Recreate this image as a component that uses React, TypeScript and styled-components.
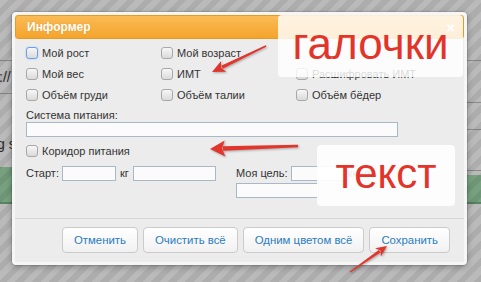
import React from 'react';
import styled, { createGlobalStyle } from 'styled-components';

const Global = createGlobalStyle`
  html, body { margin: 0; padding: 0; }
  body {
    width: 481px; height: 282px; overflow: hidden;
    font-family: "Liberation Sans", Arial, sans-serif;
  }
  #root { width: 481px; height: 282px; }
`;

const Stage = styled.div`
  position: relative;
  width: 481px;
  height: 282px;
  overflow: hidden;
  background: #ffffff;
  display: flex;
  justify-content: space-between;
`;

const SidePane = styled.div<{ $w: number }>`
  width: ${p => p.$w}px;
  display: flex;
  flex-direction: column;
  overflow: hidden;
`;

const LineBox = styled.div<{ $mt: number; $h: number }>`
  margin-top: ${p => p.$mt}px;
  height: ${p => p.$h}px;
  flex: none;
  box-sizing: border-box;
  border-top: 1px solid #bdbdbd;
  border-bottom: 1px solid #bdbdbd;
  display: flex;
  align-items: center;
  font-size: 14px;
  color: #3a3a3a;
  white-space: nowrap;
`;

const PageText = styled.div<{ $mt: number; $indent: number }>`
  margin-top: ${p => p.$mt}px;
  height: 14px;
  line-height: 14px;
  flex: none;
  font-size: 14px;
  color: #3a3a3a;
  white-space: nowrap;
  text-indent: ${p => p.$indent}px;
`;

const GreenBand = styled.div<{ $mt: number; $h: number }>`
  margin-top: ${p => p.$mt}px;
  height: ${p => p.$h}px;
  flex: none;
  box-sizing: border-box;
  background: #a2dcae;
  border-bottom: 2px solid #78b685;
`;

const Stripes = styled.div`
  position: absolute;
  inset: 0;
  background: repeating-linear-gradient(
    135deg,
    rgba(0, 0, 0, 0.27) 0px,
    rgba(0, 0, 0, 0.27) 6px,
    rgba(0, 0, 0, 0.32) 6px,
    rgba(0, 0, 0, 0.32) 12px
  );
`;

const Modal = styled.div`
  position: absolute;
  left: 12px;
  top: 12px;
  width: 455px;
  height: 253px;
  box-sizing: border-box;
  border: 3px solid #f6f6f6;
  border-radius: 4px;
  background: #ececec;
  box-shadow: 0 0 0 1px rgba(0, 0, 0, 0.1), 0 2px 6px rgba(0, 0, 0, 0.25);
  display: flex;
  flex-direction: column;
  font-size: 11px;
  color: #333;
`;

const Header = styled.div`
  height: 24px;
  flex: none;
  box-sizing: border-box;
  border: 1px solid #e99a22;
  border-radius: 3px;
  background: linear-gradient(#fabb55, #f4a42c);
  display: flex;
  align-items: center;
  justify-content: space-between;
  padding: 0 8px 0 11px;
`;

const Title = styled.span`
  color: #fff;
  font-weight: bold;
  font-size: 12px;
  text-shadow: 0 0 1px rgba(160, 90, 0, 0.4);
`;

const Close = styled.span`
  color: #fff;
  font-weight: bold;
  font-size: 15px;
  line-height: 1;
`;

const Body = styled.div`
  padding: 0 11px;
  display: flex;
  flex-direction: column;
`;

const CheckGrid = styled.div`
  margin-top: 3px;
  display: grid;
  grid-template-columns: 135px 135px 1fr;
  grid-auto-rows: 21px;
`;

const CheckItem = styled.label<{ $mt?: number }>`
  display: flex;
  align-items: center;
  gap: 4px;
  height: 21px;
  margin-top: ${p => p.$mt ?? 0}px;
  font-size: 11px;
  color: #333;
  white-space: nowrap;
`;

const Box = styled.span<{ $focus?: boolean }>`
  width: 12px;
  height: 12px;
  box-sizing: border-box;
  flex: none;
  border-radius: 3px;
  border: 1px solid ${p => (p.$focus ? '#6d9de2' : '#a8a8a8')};
  background: linear-gradient(#f7f7f7, #dadada);
  box-shadow: ${p => (p.$focus ? '0 0 2px #9fc3f2' : 'none')};
`;

const FieldLabel = styled.div`
  margin-top: 4px;
  height: 13px;
  line-height: 13px;
  font-size: 11px;
  color: #333;
`;

const TextInput = styled.div<{ $w: number }>`
  width: ${p => p.$w}px;
  height: 15px;
  flex: none;
  box-sizing: border-box;
  border: 1px solid #a9b8c7;
  background: #fbfbfb;
`;

const AmountRow = styled.div`
  margin-top: 5px;
  display: flex;
  align-items: flex-start;
`;

const StartGroup = styled.div`
  width: 210px;
  display: flex;
  align-items: center;
  gap: 3px;
  height: 15px;
`;

const GoalGroup = styled.div`
  width: 162px;
  display: flex;
  flex-wrap: wrap;
  align-items: center;
  column-gap: 3px;
  row-gap: 2px;
`;

const Unit = styled.span`
  font-size: 11px;
  color: #333;
  line-height: 15px;
  margin: 0 1px;
`;

const Inline = styled.span`
  font-size: 11px;
  color: #333;
  line-height: 15px;
  white-space: nowrap;
`;

const Footer = styled.div`
  margin-top: auto;
  border-top: 1px solid #d7d7d7;
  padding: 8px 14px 9px;
  display: flex;
  justify-content: flex-end;
  gap: 5px;
`;

const Btn = styled.button`
  margin: 0;
  height: 26px;
  padding: 0 11px;
  border: 1px solid #cbcbcb;
  border-radius: 4px;
  background: linear-gradient(#ffffff, #f1f1f1);
  color: #2b7cbf;
  font-family: "Liberation Sans", Arial, sans-serif;
  font-size: 11.4px;
  white-space: nowrap;
`;

const Note = styled.div<{ $l: number; $t: number; $w: number; $h: number; $a: number; $fs: number }>`
  position: absolute;
  left: ${p => p.$l}px;
  top: ${p => p.$t}px;
  width: ${p => p.$w}px;
  height: ${p => p.$h}px;
  border-radius: 4px;
  background: rgba(255, 255, 255, ${p => p.$a});
  display: flex;
  align-items: center;
  justify-content: center;
  color: #e3342a;
  font-family: "Liberation Sans", Arial, sans-serif;
  font-size: ${p => p.$fs}px;
  line-height: 1;
  padding-bottom: 4px;
  box-sizing: border-box;
`;

const ArrowLayer = styled.svg`
  position: absolute;
  left: 0;
  top: 0;
  pointer-events: none;
  filter: drop-shadow(1px 1px 1px rgba(0, 0, 0, 0.3));
`;

type ArrowProps = { x1: number; y1: number; x2: number; y2: number; head: number; hw: number; w0: number; w1: number };

function Arrow({ x1, y1, x2, y2, head, hw, w0, w1 }: ArrowProps) {
  const dx = x2 - x1;
  const dy = y2 - y1;
  const len = Math.hypot(dx, dy);
  const ux = dx / len;
  const uy = dy / len;
  const nx = -uy;
  const ny = ux;
  const bx = x2 - ux * head;
  const by = y2 - uy * head;
  const shaft = [
    [x1 + nx * w0 / 2, y1 + ny * w0 / 2],
    [bx + ux * 2 + nx * w1 / 2, by + uy * 2 + ny * w1 / 2],
    [bx + ux * 2 - nx * w1 / 2, by + uy * 2 - ny * w1 / 2],
    [x1 - nx * w0 / 2, y1 - ny * w0 / 2],
  ];
  const tri = [
    [x2, y2],
    [bx + nx * hw, by + ny * hw],
    [bx + ux * 3, by + uy * 3],
    [bx - nx * hw, by - ny * hw],
  ];
  const pts = (a: number[][]) => a.map(p => `${p[0].toFixed(1)},${p[1].toFixed(1)}`).join(' ');
  return (
    <g fill="#e2352b">
      <polygon points={pts(shaft)} />
      <polygon points={pts(tri)} />
    </g>
  );
}

export default function App() {
  return (
    <>
      <Global />
      <Stage>
        <SidePane $w={12}>
          <LineBox $mt={60} $h={34}>
            <span style={{ marginLeft: -1 }}>://</span>
          </LineBox>
          <PageText $mt={43} $indent={-3}>g s</PageText>
          <GreenBand $mt={16} $h={37} />
        </SidePane>
        <SidePane $w={14}>
          <LineBox $mt={60} $h={43} />
          <LineBox $mt={26} $h={42} />
          <GreenBand $mt={4} $h={29} />
        </SidePane>
        <Stripes />

        <Modal>
          <Header>
            <Title>Информер</Title>
            <Close>×</Close>
          </Header>
          <Body>
            <CheckGrid>
              <CheckItem><Box $focus />Мой рост</CheckItem>
              <CheckItem><Box />Мой возраст</CheckItem>
              <CheckItem />
              <CheckItem><Box />Мой вес</CheckItem>
              <CheckItem><Box />ИМТ</CheckItem>
              <CheckItem><Box />Расшифровать ИМТ</CheckItem>
              <CheckItem><Box />Объём груди</CheckItem>
              <CheckItem><Box />Объём талии</CheckItem>
              <CheckItem><Box />Объём бёдер</CheckItem>
            </CheckGrid>
            <FieldLabel>Система питания:</FieldLabel>
            <TextInput $w={372} />
            <CheckItem $mt={3}><Box />Коридор питания</CheckItem>
            <AmountRow>
              <StartGroup>
                <Inline>Старт:</Inline>
                <TextInput $w={54} />
                <Unit>кг</Unit>
                <TextInput $w={83} />
              </StartGroup>
              <GoalGroup>
                <Inline>Моя цель:</Inline>
                <TextInput $w={54} />
                <Inline>ккал</Inline>
                <TextInput $w={83} />
              </GoalGroup>
            </AmountRow>
          </Body>
          <Footer>
            <Btn>Отменить</Btn>
            <Btn>Очистить всё</Btn>
            <Btn>Одним цветом всё</Btn>
            <Btn>Сохранить</Btn>
          </Footer>
        </Modal>

        <Note $l={278} $t={15} $w={185} $h={62} $a={0.82} $fs={44}>галочки</Note>
        <Note $l={317} $t={145} $w={138} $h={61} $a={0.9} $fs={42}>текст</Note>

        <ArrowLayer width={481} height={282} viewBox="0 0 481 282">
          <Arrow x1={266} y1={46} x2={212} y2={72} head={13} hw={6} w0={1.5} w1={3.5} />
          <Arrow x1={298} y1={146} x2={210} y2={149} head={15} hw={8} w0={2.5} w1={4.5} />
          <Arrow x1={350} y1={272} x2={387} y2={246} head={11} hw={5} w0={1.2} w1={3} />
        </ArrowLayer>
      </Stage>
    </>
  );
}
